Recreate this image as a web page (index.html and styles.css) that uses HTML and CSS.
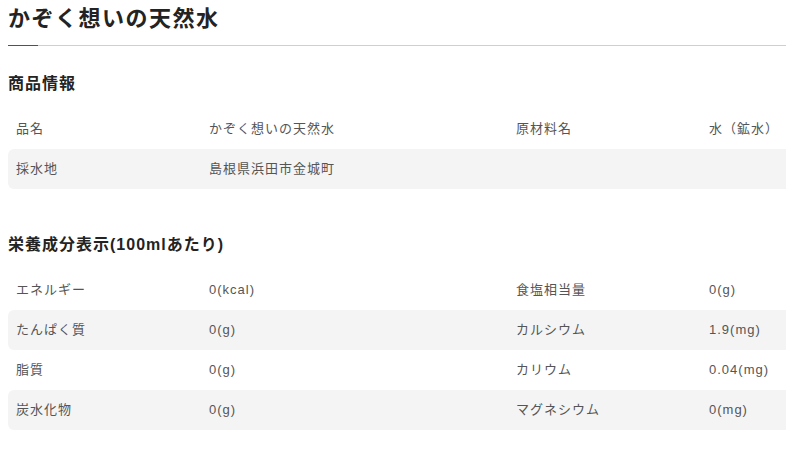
FILE: index.html
```html
<!DOCTYPE html>
<html lang="ja">
<head>
<meta charset="utf-8">
<link rel="stylesheet" href="styles.css">
</head>
<body>
<div class="page">
  <h1 class="title">かぞく想いの天然水</h1>
  <div class="divider"></div>

  <section class="section section-first">
    <h2 class="section-title">商品情報</h2>
    <div class="table">
      <div class="row">
        <div class="cell">品名</div>
        <div class="cell">かぞく想いの天然水</div>
        <div class="cell">原材料名</div>
        <div class="cell">水（鉱水）</div>
      </div>
      <div class="row row-alt">
        <div class="cell">採水地</div>
        <div class="cell">島根県浜田市金城町</div>
        <div class="cell"></div>
        <div class="cell"></div>
      </div>
    </div>
  </section>

  <section class="section section-second">
    <h2 class="section-title">栄養成分表示(100mlあたり)</h2>
    <div class="table">
      <div class="row">
        <div class="cell">エネルギー</div>
        <div class="cell">0(kcal)</div>
        <div class="cell">食塩相当量</div>
        <div class="cell">0(g)</div>
      </div>
      <div class="row row-alt">
        <div class="cell">たんぱく質</div>
        <div class="cell">0(g)</div>
        <div class="cell">カルシウム</div>
        <div class="cell">1.9(mg)</div>
      </div>
      <div class="row">
        <div class="cell">脂質</div>
        <div class="cell">0(g)</div>
        <div class="cell">カリウム</div>
        <div class="cell">0.04(mg)</div>
      </div>
      <div class="row row-alt">
        <div class="cell">炭水化物</div>
        <div class="cell">0(g)</div>
        <div class="cell">マグネシウム</div>
        <div class="cell">0(mg)</div>
      </div>
    </div>
  </section>
</div>
</body>
</html>
```

FILE: styles.css
```css
html, body {
  margin: 0;
  padding: 0;
  overflow: hidden;
  background: #fff;
}

body {
  font-family: "Liberation Sans", "Noto Sans CJK JP", sans-serif;
  color: #222;
}

.page {
  width: 1000px;
  padding: 2px 8px 0;
}

.title {
  margin: 0 0 14px;
  font-family: "Noto Sans CJK JP", sans-serif;
  font-size: 22px;
  line-height: 29px;
  font-weight: 700;
  letter-spacing: 1.5px;
  color: #232323;
}

.divider {
  position: relative;
  height: 1px;
  background: #cfcfcf;
}

.divider::before {
  content: "";
  position: absolute;
  left: 0;
  top: 0;
  width: 30px;
  height: 1px;
  background: #245d8f;
}

.section-first {
  margin-top: 26px;
}

.section-second {
  margin-top: 44px;
}

.section-title {
  margin: 0 0 13px;
  font-family: "Liberation Sans", "Noto Sans CJK JP", sans-serif;
  font-size: 16px;
  line-height: 24px;
  font-weight: 700;
  letter-spacing: 1px;
  color: #232323;
}

.row {
  display: grid;
  grid-template-columns: 193px 307px 193px 307px;
  align-items: center;
  height: 40px;
  padding-left: 8px;
  border-radius: 6px;
  font-size: 13px;
  line-height: 18px;
  letter-spacing: 1px;
  color: #555;
}

.row-alt {
  background: #f4f4f4;
}
```
